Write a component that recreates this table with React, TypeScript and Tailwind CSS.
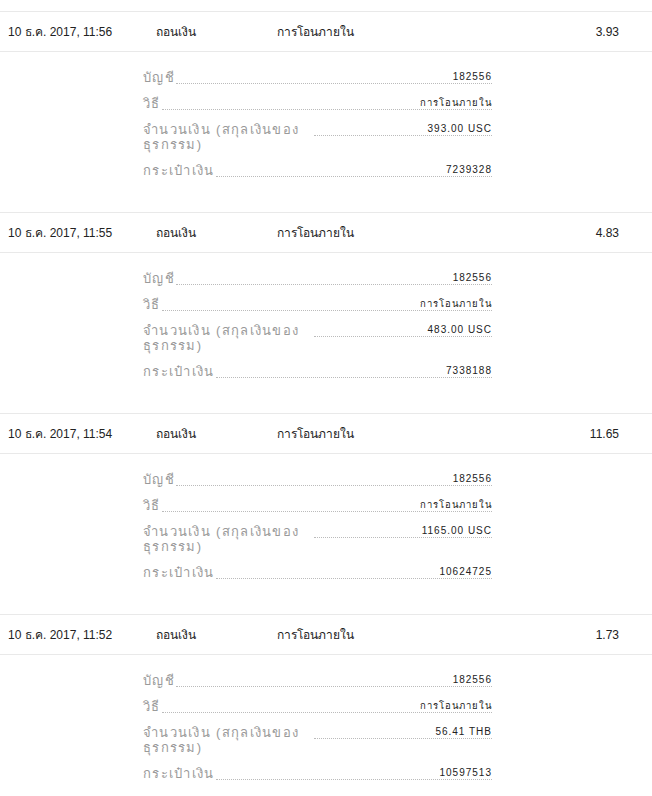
const rows = [
	{ date: "10 ธ.ค. 2017, 11:56", amount: "3.93", sum: "393.00 USC", wallet: "7239328" },
	{ date: "10 ธ.ค. 2017, 11:55", amount: "4.83", sum: "483.00 USC", wallet: "7338188" },
	{ date: "10 ธ.ค. 2017, 11:54", amount: "11.65", sum: "1165.00 USC", wallet: "10624725" },
	{ date: "10 ธ.ค. 2017, 11:52", amount: "1.73", sum: "56.41 THB", wallet: "10597513" },
];

const Detail = ({ label, value, small }: { label: string; value: string; small?: boolean }) => (
	<div className="flex items-start mb-[11px] last:mb-0">
		<span className="max-w-[170px] text-[13px] leading-[15px] text-[#9a9a9a] tracking-[1.3px]">
			{label}
		</span>
		<span
			className={`flex-1 ml-[1px] border-b border-dotted border-[#bbb] text-right text-[#222] leading-[13px] tracking-[1px] ${
				small ? "text-[9.5px]" : "text-[10px]"
			}`}
		>
			{value}
		</span>
	</div>
);

export default function App() {
	return (
		<div className="min-h-screen bg-white pt-[11px] font-['Liberation_Sans',Arial,sans-serif]">
			{rows.map((r) => (
				<div key={r.date} className="border-t border-[#e9e9e9]">
					{/* Summary row */}
					<div className="flex items-center h-[40px] text-[12px] text-[#222] border-b border-[#e9e9e9]">
						<span className="w-[148px] pl-[8px] box-content">{r.date}</span>
						<span className="w-[121px]">ถอนเงิน</span>
						<span className="flex-1">การโอนภายใน</span>
						<span className="pr-[33px]">{r.amount}</span>
					</div>
					{/* Details */}
					<div className="ml-[143px] w-[349px] pt-[18px] pb-[34px]">
						<Detail label="บัญชี" value="182556" />
						<Detail label="วิธี" value="การโอนภายใน" small />
						<Detail label="จำนวนเงิน (สกุลเงินของธุรกรรม)" value={r.sum} />
						<Detail label="กระเป๋าเงิน" value={r.wallet} />
					</div>
				</div>
			))}
		</div>
	);
}
